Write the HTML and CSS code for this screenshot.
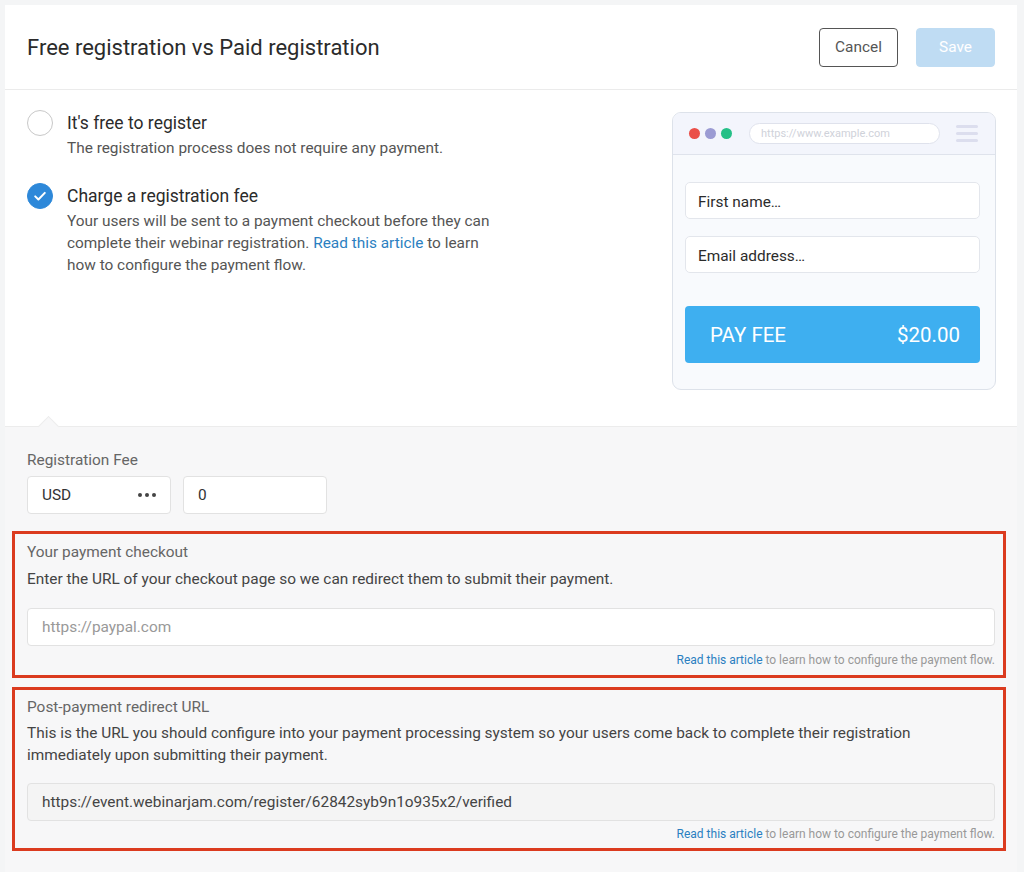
FILE: index.html
```html
<!DOCTYPE html>
<html lang="en">
<head>
<meta charset="utf-8">
<title>Free registration vs Paid registration</title>
<link rel="stylesheet" href="styles.css">
</head>
<body>
<div class="card">
  <header class="head">
    <h1 class="title">Free registration vs Paid registration</h1>
    <div class="actions">
      <button class="btn btn-cancel">Cancel</button>
      <button class="btn btn-save">Save</button>
    </div>
  </header>

  <section class="top">
    <div class="options">
      <div class="option">
        <span class="radio"></span>
        <div class="opt-text">
          <div class="opt-title">It's free to register</div>
          <div class="opt-desc">The registration process does not require any payment.</div>
        </div>
      </div>
      <div class="option">
        <span class="radio checked">
          <svg width="26" height="26" viewBox="0 0 26 26"><path d="M8.2 13.4l3.2 3.1 6.4-6.6" fill="none" stroke="#fff" stroke-width="2" stroke-linecap="round" stroke-linejoin="round"/></svg>
        </span>
        <div class="opt-text">
          <div class="opt-title">Charge a registration fee</div>
          <div class="opt-desc">Your users will be sent to a payment checkout before they can complete their webinar registration. <a class="link">Read this article</a> to learn how to configure the payment flow.</div>
        </div>
      </div>
    </div>

    <div class="preview">
      <div class="browser-bar">
        <div class="dots"><i class="dot red"></i><i class="dot purple"></i><i class="dot green"></i></div>
        <div class="url">https://www.example.com</div>
        <div class="burger"><i></i><i></i><i></i></div>
      </div>
      <div class="preview-body">
        <div class="p-input">First name…</div>
        <div class="p-input">Email address…</div>
        <div class="pay"><span>PAY FEE</span><span>$20.00</span></div>
      </div>
    </div>
  </section>

  <section class="bottom">
    <div class="label">Registration Fee</div>
    <div class="fee-row">
      <div class="field currency"><span>USD</span><span class="more"><i></i><i></i><i></i></span></div>
      <div class="field amount">0</div>
    </div>

    <div class="box">
      <div class="label">Your payment checkout</div>
      <div class="desc">Enter the URL of your checkout page so we can redirect them to submit their payment.</div>
      <div class="field wide placeholder">https://paypal.com</div>
      <div class="hint"><a class="link">Read this article</a> to learn how to configure the payment flow.</div>
    </div>

    <div class="box box2">
      <div class="label">Post-payment redirect URL</div>
      <div class="desc">This is the URL you should configure into your payment processing system so your users come back to complete their registration immediately upon submitting their payment.</div>
      <div class="field wide disabled">https://event.webinarjam.com/register/62842syb9n1o935x2/verified</div>
      <div class="hint"><a class="link">Read this article</a> to learn how to configure the payment flow.</div>
    </div>
  </section>
</div>
</body>
</html>
```

FILE: styles.css
```css
* { box-sizing: border-box; }
html, body { margin: 0; padding: 0; }
body {
  background: #f4f5f6;
  font-family: Roboto, "Liberation Sans", Arial, sans-serif;
  color: #333;
  width: 1024px;
  height: 872px;
  overflow: hidden;
}
.card {
  margin: 5px 7px 0 5px;
  background: #fff;
}
.head {
  height: 85px;
  padding: 0 22px;
  display: flex;
  align-items: center;
  justify-content: space-between;
  border-bottom: 1px solid #ebebeb;
}
.title {
  margin: 0;
  font-size: 22px;
  font-weight: 400;
  color: #2b2b2b;
}
.actions { display: flex; gap: 18px; }
.btn {
  width: 79px;
  height: 39px;
  border-radius: 4px;
  font-family: inherit;
  font-size: 15.4px;
}
.btn-cancel { background: #fff; border: 1px solid #555; color: #555; }
.btn-save { background: #bfdcf3; border: 1px solid #bfdcf3; color: #fff; }

.top {
  display: flex;
  justify-content: space-between;
  padding: 22px 21px 36px 22px;
}
.options { display: flex; flex-direction: column; gap: 26px; }
.option { display: flex; gap: 14px; }
.radio {
  flex: none;
  width: 26px;
  height: 26px;
  border-radius: 50%;
  border: 1px solid #c8c8c8;
  background: #fff;
  display: flex;
  align-items: center;
  justify-content: center;
  margin-top: -2px;
}
.radio.checked { background: #2d88d9; border-color: #2d88d9; }
.radio svg { flex: none; }
.opt-title { font-size: 17.5px; line-height: 22px; color: #2b2b2b; }
.opt-desc { font-size: 15.4px; line-height: 22px; color: #555; width: 440px; margin-top: 3px; }
.link { color: #2b7fc1; text-decoration: none; }

.preview {
  width: 324px;
  height: 278px;
  border: 1px solid #dde2ea;
  border-radius: 9px;
  background: #f8fafd;
  overflow: hidden;
}
.browser-bar {
  height: 42px;
  background: #f3f5fc;
  border-bottom: 1px solid #dfe3ec;
  display: flex;
  align-items: center;
  padding: 0 17px 0 16px;
}
.dots { display: flex; gap: 5px; }
.dot { display: block; width: 11px; height: 11px; border-radius: 50%; }
.dot.red { background: #ea4f48; }
.dot.purple { background: #9b9bd3; }
.dot.green { background: #25c087; }
.url {
  margin-left: 17px;
  width: 191px;
  height: 21px;
  border: 1px solid #dfe2ec;
  border-radius: 11px;
  background: #fff;
  font-size: 11px;
  color: #cfd2da;
  line-height: 19px;
  padding-left: 11px;
}
.burger { margin-left: auto; display: flex; flex-direction: column; gap: 4px; }
.burger i { display: block; width: 22px; height: 3px; background: #dcdeee; border-radius: 2px; }
.preview-body { padding: 27px 15px 0 12px; }
.p-input {
  height: 37px;
  background: #fff;
  border: 1px solid #e3e6ec;
  border-radius: 5px;
  font-size: 15.4px;
  color: #2b2b2b;
  line-height: 38px;
  padding-left: 12px;
  margin-bottom: 17px;
}
.pay {
  margin-top: 33px;
  height: 57px;
  background: #3eaff0;
  border-radius: 4px;
  color: #fff;
  font-size: 20.5px;
  display: flex;
  align-items: center;
  justify-content: space-between;
  padding: 0 20px 0 25px;
}

.bottom {
  position: relative;
  background: #f7f7f8;
  border-top: 1px solid #ececec;
  padding: 23px 22px 22px 22px;
}
.bottom::before {
  content: "";
  position: absolute;
  left: 36px;
  top: -8px;
  width: 14px;
  height: 14px;
  background: #f7f7f8;
  border-left: 1px solid #ececec;
  border-top: 1px solid #ececec;
  transform: rotate(45deg);
}
.label { font-size: 15.4px; line-height: 20px; color: #666; }
.fee-row { display: flex; gap: 12px; margin-top: 6px; }
.field {
  height: 38px;
  background: #fff;
  border: 1px solid #e2e2e2;
  border-radius: 4px;
  font-size: 15.4px;
  color: #333;
  line-height: 36px;
  padding: 0 14px;
}
.currency { width: 144px; display: flex; justify-content: space-between; align-items: center; }
.more { display: flex; gap: 3px; }
.more i { display: block; width: 4px; height: 4px; border-radius: 50%; background: #444; }
.amount { width: 144px; }

.box {
  margin: 17px -11px 0 -15px;
  border: 3px solid #db3b1f;
  padding: 8px 8px 6px 12px;
}
.desc { font-size: 15.4px; line-height: 22px; color: #444; margin-top: 6px; }
.wide { margin-top: 18px; width: 100%; }
.hint { text-align: right; font-size: 12px; line-height: 18px; color: #999; margin-top: 5px; }
.box2 { margin-top: 9px; padding-top: 7px; padding-bottom: 5px; }
.box2 .desc { max-width: 905px; margin-top: 5px; }
.box2 .wide { margin-top: 17px; }
.box2 .hint { margin-top: 4px; }
.placeholder { color: #999; }
.disabled { background: #f4f4f4; color: #444; }
```
